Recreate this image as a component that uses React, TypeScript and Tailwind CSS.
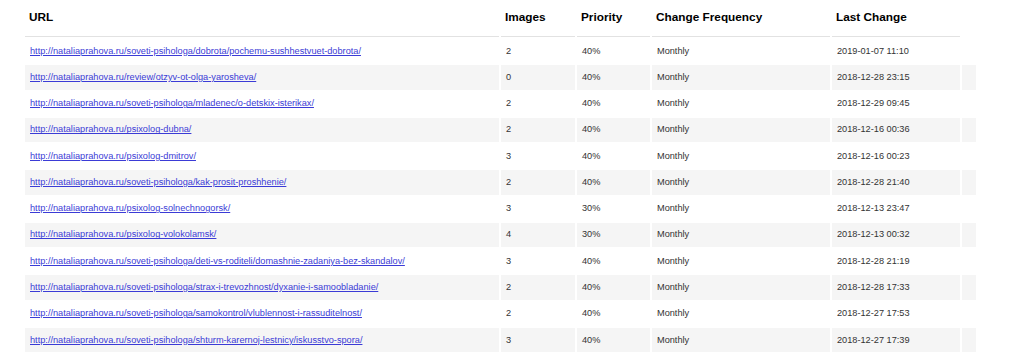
const rows = [
  { url: "http://nataliaprahova.ru/soveti-psihologa/dobrota/pochemu-sushhestvuet-dobrota/", images: 2, priority: "40%", freq: "Monthly", last: "2019-01-07 11:10" },
  { url: "http://nataliaprahova.ru/review/otzyv-ot-olga-yarosheva/", images: 0, priority: "40%", freq: "Monthly", last: "2018-12-28 23:15" },
  { url: "http://nataliaprahova.ru/soveti-psihologa/mladenec/o-detskix-isterikax/", images: 2, priority: "40%", freq: "Monthly", last: "2018-12-29 09:45" },
  { url: "http://nataliaprahova.ru/psixolog-dubna/", images: 2, priority: "40%", freq: "Monthly", last: "2018-12-16 00:36" },
  { url: "http://nataliaprahova.ru/psixolog-dmitrov/", images: 3, priority: "40%", freq: "Monthly", last: "2018-12-16 00:23" },
  { url: "http://nataliaprahova.ru/soveti-psihologa/kak-prosit-proshhenie/", images: 2, priority: "40%", freq: "Monthly", last: "2018-12-28 21:40" },
  { url: "http://nataliaprahova.ru/psixolog-solnechnogorsk/", images: 3, priority: "30%", freq: "Monthly", last: "2018-12-13 23:47" },
  { url: "http://nataliaprahova.ru/psixolog-volokolamsk/", images: 4, priority: "30%", freq: "Monthly", last: "2018-12-13 00:32" },
  { url: "http://nataliaprahova.ru/soveti-psihologa/deti-vs-roditeli/domashnie-zadaniya-bez-skandalov/", images: 3, priority: "40%", freq: "Monthly", last: "2018-12-28 21:19" },
  { url: "http://nataliaprahova.ru/soveti-psihologa/strax-i-trevozhnost/dyxanie-i-samoobladanie/", images: 2, priority: "40%", freq: "Monthly", last: "2018-12-28 17:33" },
  { url: "http://nataliaprahova.ru/soveti-psihologa/samokontrol/vlublennost-i-rassuditelnost/", images: 2, priority: "40%", freq: "Monthly", last: "2018-12-27 17:53" },
  { url: "http://nataliaprahova.ru/soveti-psihologa/shturm-karernoj-lestnicy/iskusstvo-spora/", images: 3, priority: "40%", freq: "Monthly", last: "2018-12-27 17:39" },
];

const th = "h-[36px] align-top pt-[10px] px-[4px] text-left text-[11.8px] leading-[13px] font-bold text-black border-b border-[#e2e2e2]";
const td = "h-[24.27px] px-[5px] py-0 align-middle text-[9.2px] leading-[11px] text-[#333]";

export default function App() {
  return (
    <div className="w-[1024px] h-[355px] overflow-hidden bg-white font-['Liberation_Sans',Arial,sans-serif]">
      <table className="ml-[23px] -mt-[1px] border-separate border-spacing-[2px] table-fixed w-[955px]">
        <colgroup>
          <col className="w-[474px]" />
          <col className="w-[74px]" />
          <col className="w-[73px]" />
          <col className="w-[178px]" />
          <col className="w-[128px]" />
          <col className="w-[14px]" />
        </colgroup>
        <thead>
          <tr>
            <th className={th}>URL</th>
            <th className={th}>Images</th>
            <th className={th}>Priority</th>
            <th className={th}>Change Frequency</th>
            <th className={th}>Last Change</th>
            <th className="p-0"></th>
          </tr>
        </thead>
        <tbody>
          {rows.map((r, i) => (
            <tr key={r.url} className={i % 2 === 1 ? "bg-[#f5f5f5]" : "bg-white"}>
              <td className={td}>
                <a href="#" className="text-[#3b3bd6] underline">
                  {r.url}
                </a>
              </td>
              <td className={td}>{r.images}</td>
              <td className={td}>{r.priority}</td>
              <td className={td}>{r.freq}</td>
              <td className={td}>{r.last}</td>
              <td className={td}></td>
            </tr>
          ))}
        </tbody>
      </table>
    </div>
  );
}
